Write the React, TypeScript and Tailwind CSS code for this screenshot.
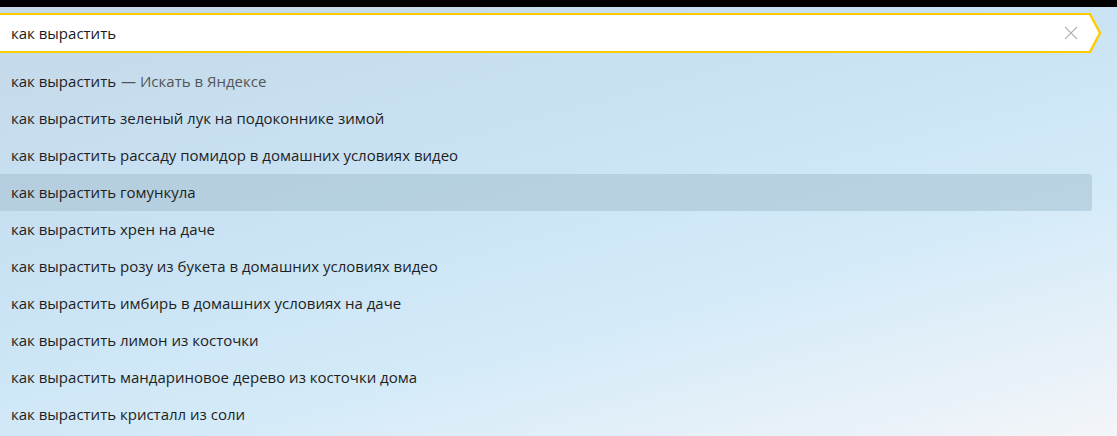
import React from 'react';

const QUERY = 'как вырастить';

const SUGGESTIONS = [
  'как вырастить зеленый лук на подоконнике зимой',
  'как вырастить рассаду помидор в домашних условиях видео',
  'как вырастить гомункула',
  'как вырастить хрен на даче',
  'как вырастить розу из букета в домашних условиях видео',
  'как вырастить имбирь в домашних условиях на даче',
  'как вырастить лимон из косточки',
  'как вырастить мандариновое дерево из косточки дома',
  'как вырастить кристалл из соли',
];

const ACTIVE_INDEX = 2;

function ArrowTip() {
  return (
    <svg width="14" height="40" viewBox="0 0 14 40" className="shrink-0 block">
      <polygon points="0,1 1,1 11,20 1,39 0,39" fill="#ffffff" />
      <polyline points="0,1 1,1 11,20 1,39 0,39" fill="none" stroke="#ffcc00" strokeWidth="2.4" />
    </svg>
  );
}

function SearchBox() {
  return (
    <div className="flex items-stretch h-[40px] mt-[6px]">
      <div className="flex-1 flex items-center bg-white border-y-2 border-[#ffcc00] pl-[11px] pr-[11px]">
        <span className="flex-1 text-[15px] text-[#1a1a1a]">{QUERY}</span>
        <svg width="14" height="14" viewBox="0 0 14 14" className="text-[#b4b4b4]">
          <path d="M1 1 L13 13 M13 1 L1 13" stroke="currentColor" strokeWidth="1.1" />
        </svg>
      </div>
      <ArrowTip />
      <div className="w-[14px]" />
    </div>
  );
}

export default function App() {
  return (
    <div
      className="h-[436px] w-full overflow-hidden bg-[linear-gradient(165deg,#c4d8e9_0%,#c9e3f4_40%,#d3eaf8_65%,#f3f5f9_100%)]"
      style={{ fontFamily: '"Open Sans", "Noto Sans", sans-serif' }}
    >
      <div className="h-[7px] bg-black" />
      <SearchBox />

      <ul className="mt-[10px] pr-[25px]">
        <li className="h-[37px] flex items-center pl-[11px] text-[15px] text-[#1e1e1e]">
          {QUERY}
          <span className="text-[#555] ml-[5px]">— Искать в Яндексе</span>
        </li>
        {SUGGESTIONS.map((text, i) => (
          <li
            key={text}
            className={`h-[37px] flex items-center pl-[11px] text-[15px] text-[#1e1e1e] rounded-r-[3px] ${
              i === ACTIVE_INDEX ? 'bg-[#a9c3d3]/60' : ''
            }`}
          >
            {text}
          </li>
        ))}
      </ul>
    </div>
  );
}
